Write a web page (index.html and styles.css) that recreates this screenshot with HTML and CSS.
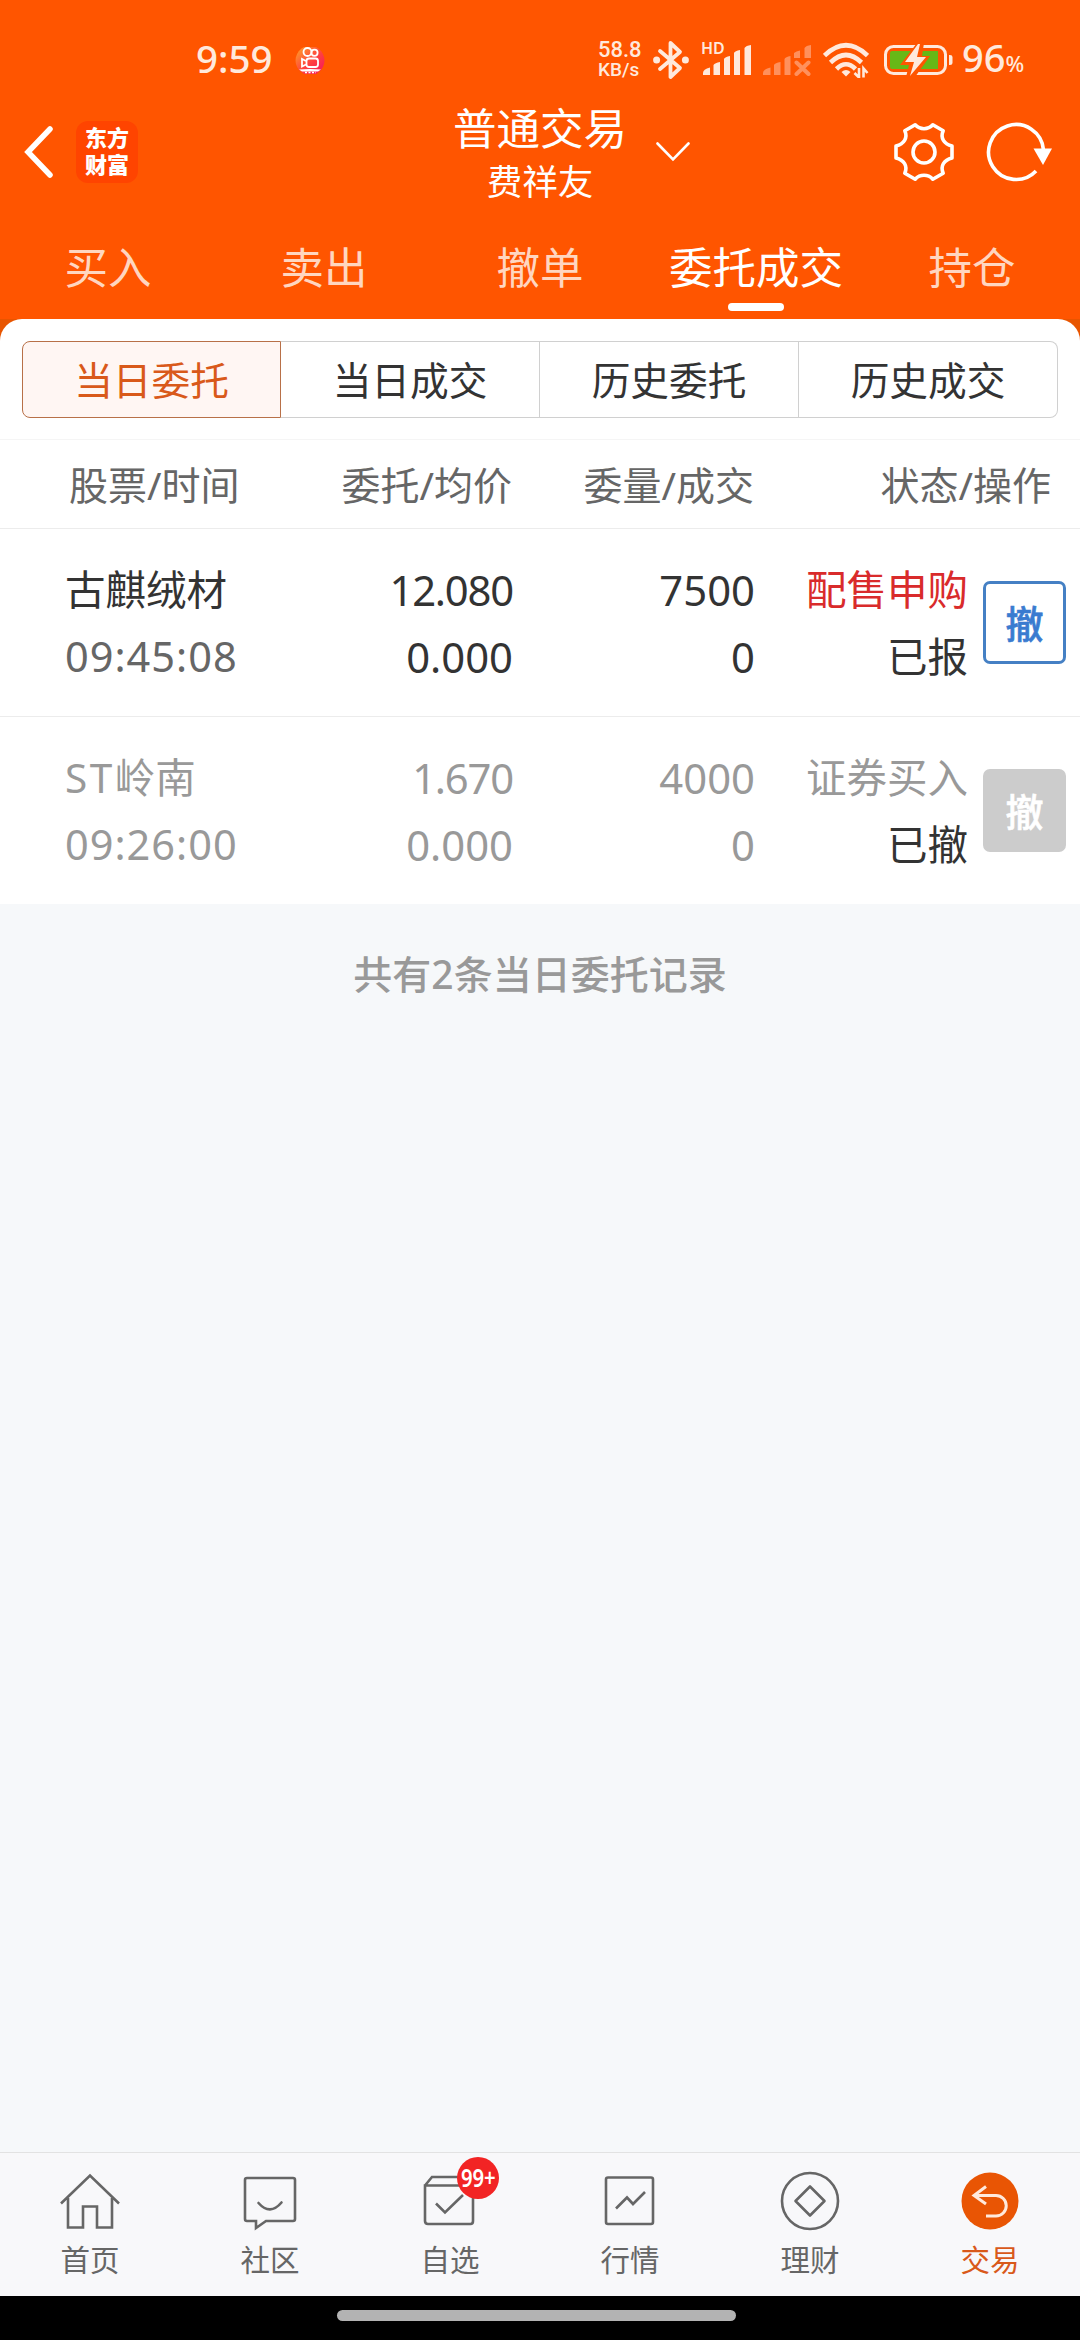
FILE: index.html
```html
<!DOCTYPE html>
<html lang="zh-CN">
<head>
  <meta charset="UTF-8">
  <title>普通交易 - 委托成交</title>
  <link rel="stylesheet" href="styles.css">
</head>
<body>
  <header class="top">
    <div class="status-bar">
      <span class="clock">9:59</span>
      <svg class="app-dot" width="32" height="28" viewBox="0 0 32 28">
        <defs>
          <linearGradient id="dot" x1="0" y1="0" x2="1" y2="1">
            <stop offset="0" stop-color="#ffa726"/>
            <stop offset=".55" stop-color="#ff4040"/>
            <stop offset="1" stop-color="#f5145f"/>
          </linearGradient>
        </defs>
        <path d="M10 1H22A15 15 0 0 1 27 24L22 28H10L5 24A15 15 0 0 1 10 1Z" fill="url(#dot)"/>
        <g fill="none" stroke="#fff" stroke-width="1.8">
          <circle cx="13.5" cy="6" r="4"/>
          <circle cx="20.5" cy="6.8" r="3.1"/>
          <rect x="12.5" y="12.5" width="11.5" height="8.5" rx="2.5"/>
          <path d="M12 15L8 13V20.500L12 18.500"/>
        </g>
        <path d="M5 23.500Q16 22.500 27 23.500L24 25.500H8Z" fill="#fff"/>
        <path d="M11 26.500H22" stroke="#fff" stroke-width="1.500" stroke-dasharray="2 1.500"/>
      </svg>
      <div class="speed"><span>58.8</span><span class="unit">KB/s</span></div>
      <svg class="bluetooth" width="36" height="40" viewBox="0 0 36 40">
        <path d="M7 11L27 28L17.500 37V3L27 12L7 29" fill="none" stroke="#ffe9dc" stroke-width="3.800" stroke-linejoin="round" stroke-linecap="round"/>
        <circle cx="3.600" cy="20" r="3.500" fill="#ffe9dc"/>
        <circle cx="32.400" cy="20" r="3.500" fill="#ffe9dc"/>
      </svg>
      <div class="signal">
        <span class="hd">HD</span>
        <svg width="48" height="32" viewBox="0 0 48 32" fill="#ffe9dc">
          <path d="M0 31V29Q0 25 7 23.500V31ZM10.500 31V21Q12 19 17 18V31ZM21 31V15Q22 13 27 12V31ZM31 31V9Q32 7 37 6V31ZM41.500 31V4Q43 1.500 48 1V31Z"/>
        </svg>
      </div>
      <svg class="signal-off" width="48" height="32" viewBox="0 0 48 32" fill="#ff905c">
        <path d="M0 31V29Q0 25 7.500 23.500V31ZM11 31V21Q12 19 17.500 18V31ZM21.500 31V15Q22.500 13 27.500 12V31ZM31 14V9Q33 7 37 6.500V14ZM41.500 14V4Q43 1.500 48 1V14Z"/>
        <path d="M33.500 18.500L45.500 30M45.500 18.500L33.500 30" stroke="#ff905c" stroke-width="4" stroke-linecap="round"/>
      </svg>
      <svg class="wifi" width="46" height="36" viewBox="0 0 46 36">
        <g fill="none" stroke="#ffe9dc" stroke-width="4.600">
          <path d="M1.500 13.500Q23 -7 44.500 13.500"/>
          <path d="M7.500 20.500Q23 5.500 38.500 20.500"/>
          <path d="M13.500 27Q23 17.500 32.500 27"/>
        </g>
        <path d="M18.500 30Q23 26 27.500 30L23 34.500Z" fill="#ffe9dc"/>
        <path d="M36 26V35.500L31.500 31M40.500 35.500V26.500L44.500 31" fill="none" stroke="#ffe9dc" stroke-width="2.600"/>
      </svg>
      <svg class="battery" width="70" height="34" viewBox="0 0 70 34">
        <rect x="1.500" y="3.500" width="60" height="27" rx="8" fill="none" stroke="#ffe9dc" stroke-width="3"/>
        <path d="M65 12H66Q68.500 12 68.500 14V20Q68.500 22 66 22H65Z" fill="#ffe9dc"/>
        <path d="M8 8H54V26H8Q6 26 6 24V10Q6 8 8 8Z" fill="#67b817"/>
        <path d="M33 0L16 22H25L22 34H31L46 13H38L40 0Z" fill="#ff5500"/>
        <path d="M34 1L21 19H30L26 33L42 14H33L36 1Z" fill="#ffe9dc"/>
      </svg>
      <span class="percent">96<small>%</small></span>
    </div>

    <div class="title-bar">
      <div class="left">
        <svg width="32" height="54" viewBox="0 0 32 54"><path d="M27 4L5 27L27 50" fill="none" stroke="#fff" stroke-width="5.500" stroke-linecap="round"/></svg>
        <div class="logo"><span>东方</span><span>财富</span></div>
      </div>
      <div class="account">
        <h1>普通交易</h1>
        <p>费祥友</p>
      </div>
      <div class="right">
        <svg width="34" height="20" viewBox="0 0 34 20"><path d="M1.500 1.500L17 17.500L32.500 1.500" fill="none" stroke="#fff" stroke-width="2.600" stroke-linecap="round"/></svg>
        <svg class="gear" width="62" height="62" viewBox="-31 -31 62 62" fill="none" stroke="#fff" stroke-width="3.600" stroke-linejoin="round">
          <path d="M28 6V-6C20 -8 16 -14 19.200 -21.200L8.800 -27.200C4 -22 -4 -22 -8.800 -27.200L-19.200 -21.200C-16 -14 -20 -8 -28 -6V6C-20 8 -16 14 -19.200 21.200L-8.800 27.200C-4 22 4 22 8.800 27.200L19.200 21.200C16 14 20 8 28 6Z"/>
          <circle r="11"/>
        </svg>
        <svg class="refresh" width="66" height="62" viewBox="0 0 66 62">
          <path d="M50 50A27.500 27.500 0 1 1 57.500 29" fill="none" stroke="#fff" stroke-width="3.600"/>
          <path d="M47.500 27.500H66L57 44Z" fill="#fff"/>
        </svg>
      </div>
    </div>

    <nav class="tabs">
      <a>买入</a>
      <a>卖出</a>
      <a>撤单</a>
      <a class="active">委托成交</a>
      <a>持仓</a>
    </nav>
  </header>

  <main>
    <div class="corner">
      <div class="filter">
        <div class="segments">
          <button class="active">当日委托</button>
          <button>当日成交</button>
          <button>历史委托</button>
          <button>历史成交</button>
        </div>
      </div>
    </div>

    <div class="orders">
      <div class="order-head">
        <span>股票/时间</span>
        <span>委托/均价</span>
        <span>委量/成交</span>
        <span>状态/操作</span>
      </div>
      <div class="order">
        <div class="cell"><span>古麒绒材</span><span class="time">09:45:08</span></div>
        <div class="cell num"><span class="price">12.080</span><span>0.000</span></div>
        <div class="cell num"><span>7500</span><span>0</span></div>
        <div class="cell"><span class="red">配售申购</span><span class="state">已报</span></div>
        <button class="cancel">撤</button>
      </div>
      <div class="order done">
        <div class="cell"><span><span class="mark">ST</span>岭南</span><span class="time">09:26:00</span></div>
        <div class="cell num"><span class="price">1.670</span><span>0.000</span></div>
        <div class="cell num"><span>4000</span><span>0</span></div>
        <div class="cell"><span>证券买入</span><span class="state">已撤</span></div>
        <button class="cancel">撤</button>
      </div>
    </div>

    <p class="total">共有2条当日委托记录</p>
  </main>

  <nav class="bottom-nav">
    <a>
      <svg width="62" height="62" viewBox="0 0 62 62">
        <path d="M2 33.500L31 5.500L60 33.500M9 28V57.500H24V36.500H38V57.500H53V28"/>
      </svg>
      <span>首页</span>
    </a>
    <a>
      <svg width="62" height="62" viewBox="0 0 62 62">
        <path d="M8 8H54Q56 8 56 10V49Q56 51 54 51H27L17 58V51H8Q6 51 6 49V10Q6 8 8 8Z"/>
        <path d="M19.500 33Q31 46 42.500 32.500" stroke-linecap="round"/>
      </svg>
      <span>社区</span>
    </a>
    <a>
      <svg width="62" height="62" viewBox="0 0 62 62">
        <path d="M6 15.500L13 7H49L54 15.500M6 15.500H54V51Q54 54 51.500 54H9Q6 54 6 51Z"/>
        <path d="M17 33.500L26 42.500L44 25"/>
      </svg>
      <b class="badge"><i>99+</i></b>
      <span>自选</span>
    </a>
    <a>
      <svg width="62" height="62" viewBox="0 0 62 62">
        <rect x="7" y="7.500" width="47" height="46.500" rx="2"/>
        <path d="M17 38.500L28 27.500L34 34L46 22"/>
      </svg>
      <span>行情</span>
    </a>
    <a>
      <svg width="62" height="62" viewBox="0 0 62 62">
        <circle cx="31" cy="31" r="28"/>
        <path d="M31 16.500L45.500 31L31 45.500L16.500 31Z" stroke-linejoin="round"/>
      </svg>
      <span>理财</span>
    </a>
    <a class="active">
      <svg width="62" height="62" viewBox="0 0 62 62">
        <circle class="disc" cx="31" cy="31" r="28.500"/>
        <path class="arrow" d="M27 16.500L15 25.500L27 34M15 25.500H37A10 10 0 0 1 37 46H27"/>
      </svg>
      <span>交易</span>
    </a>
  </nav>
  <div class="home-bar"><span></span></div>
</body>
</html>
```
FILE: styles.css
```css
* {
  box-sizing: border-box;
}

body {
  width: 1080px;
  height: 2340px;
  margin: 0;
  display: flex;
  flex-direction: column;
  background-color: #f6f8fa;
  color: #333;
  font-family: "Noto Sans", "Noto Sans CJK SC", sans-serif;
}

svg {
  display: block;
  flex: none;
}

button {
  font-family: inherit;
  padding: 0;
}

.top {
  height: 319px;
  background-color: #ff5500;
  color: #fff;
}

/* status bar */
.status-bar {
  height: 98px;
  padding: 21px 0 0 196px;
  display: flex;
  align-items: center;
  color: #ffe9dc;
}

.clock {
  width: 98px;
  padding-bottom: 3px;
  font-size: 38.5px;
  font-weight: 500;
  line-height: 44px;
}

.speed {
  width: 46px;
  margin-left: 272px;
  display: flex;
  flex-direction: column;
  font-family: Roboto, sans-serif;
  font-size: 22px;
  font-weight: 500;
  line-height: 20px;
}

.unit {
  font-size: 19px;
  line-height: 19px;
}

.bluetooth {
  margin-left: 9px;
}

.signal {
  width: 50px;
  margin-left: 12px;
  position: relative;
}

.signal svg {
  margin-left: 2px;
}

.hd {
  position: absolute;
  left: 0;
  top: -4px;
  font-size: 16px;
  font-weight: 600;
  line-height: 16px;
}

.signal-off {
  margin-left: 12px;
}

.wifi {
  margin-left: 12px;
}

.battery {
  margin-left: 15px;
}

.percent {
  margin-left: 8px;
  font-size: 38px;
  font-weight: 500;
  line-height: 44px;
}

.percent small {
  font-size: 22px;
}

/* title */
.title-bar {
  height: 108px;
  display: grid;
  grid-template-columns: 440px 200px 440px;
  align-items: center;
}

.left {
  display: flex;
  align-items: center;
  padding-left: 23px;
}

.logo {
  width: 62px;
  height: 62px;
  margin-left: 21px;
  padding-top: 3px;
  border-radius: 12px;
  background-color: #ff4400;
  display: flex;
  flex-direction: column;
  align-items: center;
  font-size: 22px;
  font-weight: 900;
  line-height: 27px;
}

.account {
  padding-top: 2px;
  text-align: center;
}

.account h1 {
  margin: 0;
  font-size: 43.5px;
  font-weight: 400;
  line-height: 56px;
}

.account p {
  margin: 0;
  font-size: 35.5px;
  line-height: 50px;
}

.right {
  display: flex;
  align-items: center;
  padding-left: 16px;
}

.gear {
  margin-left: 203px;
}

.refresh {
  margin-left: 31px;
}

.tabs {
  height: 113px;
  display: grid;
  grid-template-columns: repeat(5, 1fr);
}

.tabs a {
  display: flex;
  flex-direction: column;
  align-items: center;
  padding-top: 31px;
  font-size: 43.5px;
  line-height: 60px;
  color: #ffd6c0;
}

.tabs .active {
  color: #fff;
}

.tabs .active::after {
  content: "";
  width: 56px;
  height: 8px;
  margin-top: 6px;
  border-radius: 4px;
  background-color: #fff;
}

/* filter buttons */
main {
  flex: 1;
}

.corner {
  background-color: #e85500;
}

.filter {
  height: 120px;
  padding: 22px 22px 0;
  background-color: #fff;
  border-radius: 22px 22px 0 0;
}

.segments {
  display: grid;
  grid-template-columns: repeat(4, 1fr);
}

.segments button {
  height: 77px;
  padding-bottom: 3px;
  border: 1px solid #d0d0d0;
  border-left-width: 0;
  background-color: #fff;
  color: #333;
  font-size: 38.7px;
}

.segments button:last-child {
  border-radius: 0 8px 8px 0;
}

.segments .active {
  border: 1px solid #b87048;
  border-radius: 8px 0 0 8px;
  background-color: #fff6f3;
  color: #d9591a;
}

/* order list */
.orders {
  background-color: #fff;
}

.order-head,
.order {
  display: grid;
  grid-template-columns: 240px 206px 242px 297px;
  border-bottom: 1px solid #ececec;
}

.order-head {
  height: 90px;
  padding-left: 66px;
  border-top: 1px solid #f5f5f5;
  font-size: 39px;
  line-height: 90px;
  color: #666;
  text-align: right;
}

.order-head span:first-child {
  padding-left: 3px;
  text-align: left;
}

.order {
  height: 188px;
  padding: 27px 0 0 65px;
  grid-template-columns: 240px 208px 242px 213px 98px;
}

.order:last-child {
  height: 187px;
  border-bottom: none;
}

.cell {
  display: flex;
  flex-direction: column;
  align-items: flex-end;
  font-size: 40.5px;
  line-height: 67px;
}

.cell:first-child {
  align-items: flex-start;
}

.num {
  font-size: 41.8px;
}

.price {
  letter-spacing: -1.2px;
}

.mark {
  letter-spacing: 2.5px;
}

.time {
  color: #666;
  font-size: 41.5px;
  letter-spacing: 1px;
}

.red {
  color: #d92b2b;
}

.done .cell,
.done .time {
  color: #999;
}

.done .state {
  color: #333;
}

.cancel {
  width: 83px;
  height: 83px;
  margin: 25px 0 0 15px;
  padding-bottom: 3px;
  border: 3px solid #4580c4;
  border-radius: 7px;
  background-color: #fff;
  color: #3a7bd0;
  font-size: 38px;
  font-weight: 500;
  -webkit-text-stroke: 0.6px;
}

.done .cancel {
  border-color: #ccc;
  background-color: #ccc;
  color: #fff;
}

.total {
  margin: 41px 0 0;
  text-align: center;
  font-size: 39px;
  font-weight: 500;
  line-height: 58px;
  color: #999;
}

/* bottom nav */
.bottom-nav {
  height: 144px;
  border-top: 1px solid #e2e2e2;
  background-color: #f8f8fa;
  display: grid;
  grid-template-columns: repeat(6, 1fr);
}

.bottom-nav a {
  position: relative;
  display: flex;
  flex-direction: column;
  align-items: center;
  padding-top: 17px;
  font-size: 29.5px;
  line-height: 44px;
  color: #666;
}

.bottom-nav a > span {
  margin-top: 6px;
}

.bottom-nav svg {
  fill: none;
  stroke: #666;
  stroke-width: 2.6;
}

.bottom-nav .active {
  color: #d9591a;
}

.bottom-nav .disc {
  fill: #e95504;
  stroke: none;
}

.bottom-nav .arrow {
  stroke: #ffe9dc;
  stroke-width: 3;
}

.badge {
  position: absolute;
  left: 97px;
  top: 4px;
  width: 42px;
  height: 42px;
  border-radius: 50%;
  background-color: #f22424;
  color: #fff;
  font-size: 26px;
  font-weight: 600;
  line-height: 40px;
  display: flex;
  justify-content: center;
}

.badge i {
  font-style: normal;
  transform: scaleX(0.78);
}

.home-bar {
  height: 44px;
  padding: 14px 0 0 337px;
  background-color: #000;
}

.home-bar span {
  display: block;
  width: 399px;
  height: 11px;
  border-radius: 6px;
  background-color: #b3b3b3;
}
```
